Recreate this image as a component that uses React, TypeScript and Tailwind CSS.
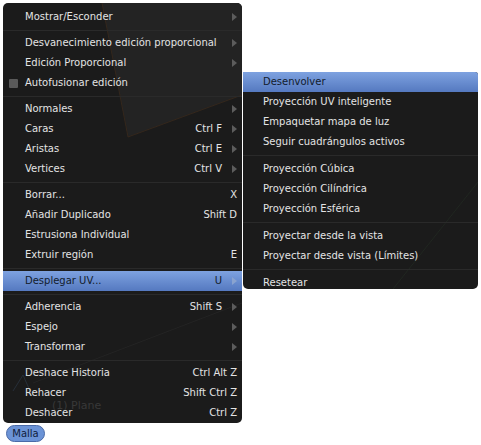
import React from 'react';

type Item = { label: string; keys?: string; sub?: boolean; check?: boolean; active?: boolean } | 'sep';

const mainItems: Item[] = [
  { label: 'Mostrar/Esconder', sub: true },
  'sep',
  { label: 'Desvanecimiento edición proporcional', sub: true },
  { label: 'Edición Proporcional', sub: true },
  { label: 'Autofusionar edición', check: true },
  'sep',
  { label: 'Normales', sub: true },
  { label: 'Caras', keys: 'Ctrl F', sub: true },
  { label: 'Aristas', keys: 'Ctrl E', sub: true },
  { label: 'Vertices', keys: 'Ctrl V', sub: true },
  'sep',
  { label: 'Borrar...', keys: 'X' },
  { label: 'Añadir Duplicado', keys: 'Shift D' },
  { label: 'Estrusiona Individual' },
  { label: 'Extruir región', keys: 'E' },
  'sep',
  { label: 'Desplegar UV...', keys: 'U', sub: true, active: true },
  'sep',
  { label: 'Adherencia', keys: 'Shift S', sub: true },
  { label: 'Espejo', sub: true },
  { label: 'Transformar', sub: true },
  'sep',
  { label: 'Deshace Historia', keys: 'Ctrl Alt Z' },
  { label: 'Rehacer', keys: 'Shift Ctrl Z' },
  { label: 'Deshacer', keys: 'Ctrl Z' },
];

const uvItems: Item[] = [
  { label: 'Desenvolver', active: true },
  { label: 'Proyección UV inteligente' },
  { label: 'Empaquetar mapa de luz' },
  { label: 'Seguir cuadrángulos activos' },
  'sep',
  { label: 'Proyección Cúbica' },
  { label: 'Proyección Cilíndrica' },
  { label: 'Proyección Esférica' },
  'sep',
  { label: 'Proyectar desde la vista' },
  { label: 'Proyectar desde vista (Límites)' },
  'sep',
  { label: 'Resetear' },
];

const Arrow = ({ active }: { active?: boolean }) => (
  <svg width="5" height="8" viewBox="0 0 5 8" className="ml-[10px] shrink-0">
    <path d="M0 0 L5 4 L0 8 Z" fill={active ? '#8aa3cf' : '#5c5c5c'} />
  </svg>
);

const Row = ({ item, pad }: { item: Exclude<Item, 'sep'>; pad: string }) => (
  <div
    className={`relative flex h-5 items-center pr-[5px] ${pad} ${
      item.active ? 'bg-gradient-to-b from-[#7ea2e0] to-[#5579c0] text-[#131c2c]' : 'text-[#e4e4e4]'
    }`}
  >
    {item.check && <span className="absolute left-[6px] top-[6px] h-[9px] w-[9px] rounded-[1px] bg-[#5a5a5a]" />}
    <span className="whitespace-nowrap">{item.label}</span>
    <span className="flex-1" />
    {item.keys && <span className="whitespace-nowrap">{item.keys}</span>}
    {item.sub && <Arrow active={item.active} />}
  </div>
);

const Sep = ({ h }: { h: string }) => (
  <div className={`flex ${h} items-center`}>
    <div className="h-px w-full bg-[#2a2a2a]" />
  </div>
);

export default function App() {
  return (
    <div
      className="relative flex h-[445px] w-[481px] flex-col items-start overflow-hidden bg-white pl-[3px] pt-[3px] text-[10px] leading-none"
      style={{ fontFamily: '"DejaVu Sans", Verdana, sans-serif' }}
    >
      {/* main Malla menu */}
      <div className="relative h-[420px] w-[239px] overflow-hidden rounded-[5px] bg-[#1b1b1b] pt-1">
        <svg className="absolute inset-0" width="239" height="420" viewBox="0 0 239 420">
          <path d="M99 0 L239 0 L239 92 L125 134 Z" fill="#232323" />
          <path d="M99 0 L125 134 L239 92" fill="none" stroke="#3a2a1c" strokeWidth="0.8" />
          <path d="M30 380 L239 300" fill="none" stroke="#262626" strokeWidth="0.8" />
          <path d="M20 372 L28 390 M20 372 L10 388" fill="none" stroke="#2a3340" strokeWidth="0.8" />
        </svg>
        <span className="absolute left-[49px] top-[397px] text-[11px] text-[#383838]">(1) Plane</span>
        <div className="relative">
          {mainItems.map((it, i) =>
            it === 'sep' ? <Sep key={i} h="h-[6px]" /> : <Row key={i} item={it} pad="pl-[22px]" />
          )}
        </div>
      </div>

      {/* Malla header button */}
      <div className="ml-[3px] mt-[2px] flex h-[17px] w-[39px] items-center justify-center rounded-full border border-[#4a6aa8] bg-[#6b93d6] text-[10px] text-[#10203c]">
        Malla
      </div>

      {/* UV submenu, popped out of Desplegar UV... */}
      <div className="absolute left-[243px] top-[72px] h-[217px] w-[235px] overflow-hidden rounded-b-[5px] rounded-tr-[3px] bg-[#1b1b1b]">
        <svg className="absolute inset-0" width="235" height="217" viewBox="0 0 235 217">
          <path d="M235 110 L150 217" fill="none" stroke="#222a22" strokeWidth="0.8" />
        </svg>
        <div className="relative">
          {uvItems.map((it, i) =>
            it === 'sep' ? <Sep key={i} h="h-[7px]" /> : <Row key={i} item={it} pad="pl-[20px]" />
          )}
        </div>
      </div>
    </div>
  );
}
